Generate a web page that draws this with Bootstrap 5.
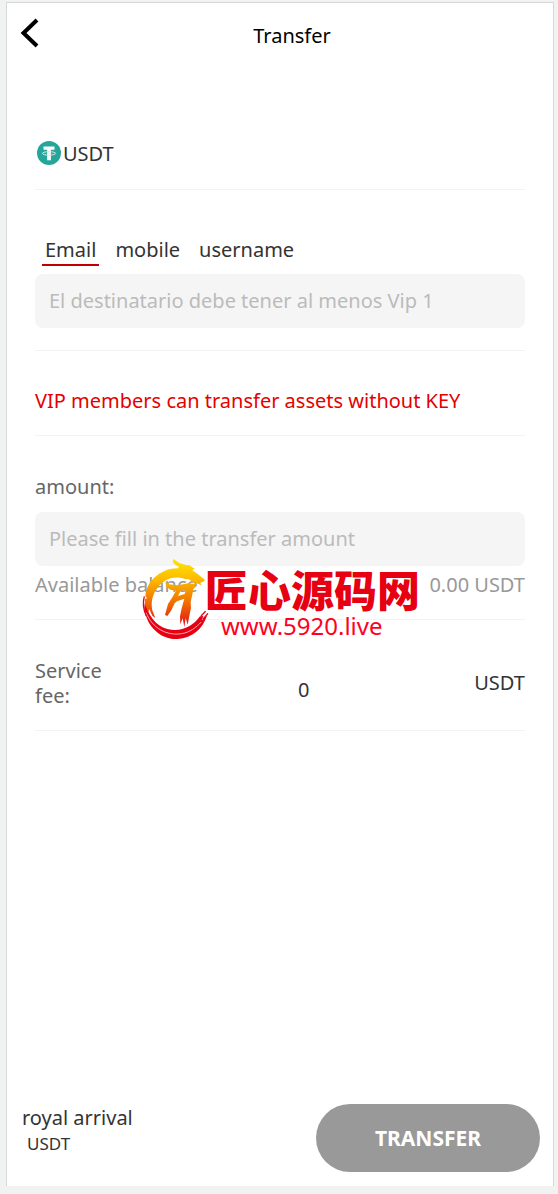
<!DOCTYPE html>
<html lang="en">
<head>
<meta charset="utf-8">
<meta name="viewport" content="width=device-width, initial-scale=1">
<title>Transfer</title>
<link href="https://cdn.jsdelivr.net/npm/bootstrap@5.3.0/dist/css/bootstrap.min.css" rel="stylesheet">
<style>
  body { background: #f1f3f2; color: #333; font: 20px/30px "Noto Sans", "Open Sans", "Noto Sans CJK SC", sans-serif; padding: 2px 4px 8px 6px; }
  .screen { min-height: calc(100vh - 10px); border: 1px solid #d5d8d7; border-bottom: 0; background: #fff; }
  .top-bar { height: 66px; color: #000; }
  .top-bar h1 { font-size: 20px; line-height: 30px; font-weight: 400; }
  .back-link { left: 13px; top: 14px; line-height: 0; color: #000; }
  .form-area { padding: 0 28px; }
  .block-row { border-bottom: 1px solid #f3f3f3; padding-bottom: 20px; }
  .coin-row { padding-top: 70px; }
  .dest-row { padding-top: 45px; padding-bottom: 22px; }
  .note-row { padding-top: 35px; padding-bottom: 19px; color: #e60000; }
  .amount-row { padding-top: 36px; padding-bottom: 19px; }
  .fee-row { padding-top: 38px; padding-bottom: 22px; }
  .pick { border: 0; background: none; color: #333; padding: 0 3px; line-height: 29px; border-bottom: 2px solid transparent; }
  .pick.active { border-color: #c00000; }
  .tab-line { padding-left: 7px; gap: 13px; margin-bottom: 8px; }
  .field { background: #f5f5f5; border: 0; border-radius: 8px; font-size: 20px; line-height: 30px; padding: 12px 14px; color: #333; }
  .field::placeholder { color: #bbb; }
  .gray-label { color: #666; }
  .amount-row label { margin-bottom: 10px; }
  .soft { color: #999; padding-top: 4px; }
  .fee-label { width: 98px; padding-right: 8px; line-height: 25px; }
  .fee-value { width: 192px; border: 0; background: none; color: #333; padding: 14px 0 0; text-align: center; }
  .bottom-bar { padding: 0 13px 14px 15px; }
  .arrival { line-height: 26px; padding-bottom: 15px; }
  .arrival small { font-size: 17px; padding-left: 5px; }
  .send-btn { width: 224px; height: 68px; border-radius: 34px; background: #999; color: #fff; font-size: 21px; font-weight: 700; border: 0; }
  .stamp { left: 105px; top: -10px; pointer-events: none; }
  .stamp-name { left: 65px; top: 11px; color: #e60012; font: 900 43px/43px "Noto Sans CJK SC", sans-serif; white-space: nowrap; }
  .stamp-site { left: 81px; top: 56px; font-size: 24px; line-height: 28px; color: #ff0023; }
</style>
</head>
<body>
<div class="screen d-flex flex-column">
  <header class="top-bar position-relative d-flex align-items-center justify-content-center">
    <a class="back-link position-absolute" href="#" aria-label="Back">
      <svg width="20" height="32" viewBox="0 0 20 32" fill="none" stroke="currentColor" stroke-width="4"><path d="M17 3 3.500 16 17 29"/></svg>
    </a>
    <h1 class="mb-0 ps-4">Transfer</h1>
  </header>

  <main class="form-area flex-grow-1">
    <section class="block-row coin-row d-flex align-items-center">
      <svg width="28" height="26" viewBox="0 0 28 26" aria-hidden="true">
        <circle cx="14" cy="12" r="12" fill="#26a69a"/>
        <path fill="#fff" d="M8.500 5.500h11v3.200h-3.600v10.500h-3.800V8.700H8.500z"/>
        <ellipse cx="14" cy="12.400" rx="6.600" ry="1.700" fill="none" stroke="#d5eeeb" stroke-width="1"/>
      </svg>
      <span>USDT</span>
    </section>

    <section class="block-row dest-row">
      <div class="tab-line d-flex" role="tablist">
        <button type="button" class="pick active" role="tab" aria-selected="true">Email</button>
        <button type="button" class="pick" role="tab" aria-selected="false">mobile</button>
        <button type="button" class="pick" role="tab" aria-selected="false">username</button>
      </div>
      <input class="field w-100 d-block" type="text" aria-label="Recipient" placeholder="El destinatario debe tener al menos Vip 1">
    </section>

    <section class="block-row note-row">VIP members can transfer assets without KEY</section>

    <section class="block-row amount-row">
      <label class="gray-label d-block" for="amount">amount:</label>
      <input id="amount" class="field w-100 d-block" type="text" placeholder="Please fill in the transfer amount">
      <div class="soft d-flex justify-content-between position-relative">
        <span>Available balance</span><span>0.00 USDT</span>
        <div class="stamp position-absolute">
          <svg width="75" height="90" viewBox="0 0 225 270" aria-hidden="true">
            <defs><linearGradient id="flame" gradientUnits="userSpaceOnUse" x1="0" y1="10" x2="0" y2="215">
              <stop offset="0" stop-color="#ffe600"/><stop offset=".3" stop-color="#fdb900"/><stop offset=".6" stop-color="#f07800"/><stop offset=".85" stop-color="#e83410"/><stop offset="1" stop-color="#e60012"/>
            </linearGradient></defs>
            <g fill="url(#flame)">
              <path d="M101 9 118 21 137 27 148 28 164 38 157 43 174 55 195 72 190 77 181 80 184 88 174 83 158 79 147 70 135 69C105 58 76 67 55 92 38 112 32 137 37 163L46 186 37 179 27 158 25 175 16 153 14 130 21 127 16 120C18 88 40 60 69 47 83 40 98 37 113 37L117 32 101 23 98 15Z"/>
              <path d="M76 79 88 85 112 88 145 82 166 84 168 92 160 99 158 110 152 138 153 156 148 180 143 206 137 186 133 213 128 187 121 205 120 181 125 157 133 128 111 136 104 142 94 163 82 180 75 177 84 144 97 124 108 104 91 101 79 92ZM122 104 114 120 134 114 138 102Z"/>
            </g>
            <g fill="#e60012">
              <path d="M14 142C24 174 46 211 82 219 121 229 158 213 180 181L190 180 185 194 202 176C188 219 158 245 113 249 65 252 20 213 13 158Z"/>
            </g>
            <path d="M18 170C38 218 81 240 125 233 150 229 169 214 184 198" fill="none" stroke="#fff" stroke-width="2"/>
            <path d="M13 121C8 139 11 163 19 180M183 180 197 166M188 190 204 172" fill="none" stroke="#e60012" stroke-width="4"/>
          </svg>
          <span class="stamp-name position-absolute">匠心源码网</span>
          <span class="stamp-site position-absolute">www.5920.live</span>
        </div>
      </div>
    </section>

    <section class="block-row fee-row d-flex justify-content-between align-items-center">
      <label class="gray-label fee-label" for="fee">Service fee:</label>
      <input id="fee" class="fee-value" type="text" value="0" readonly>
      <span>USDT</span>
    </section>
  </main>

  <footer class="bottom-bar d-flex justify-content-between align-items-center">
    <div class="arrival d-flex flex-column"><span>royal arrival</span><small>USDT</small></div>
    <button type="button" class="send-btn">TRANSFER</button>
  </footer>
</div>
<script src="https://cdn.jsdelivr.net/npm/bootstrap@5.3.0/dist/js/bootstrap.bundle.min.js"></script>
</body>
</html>
